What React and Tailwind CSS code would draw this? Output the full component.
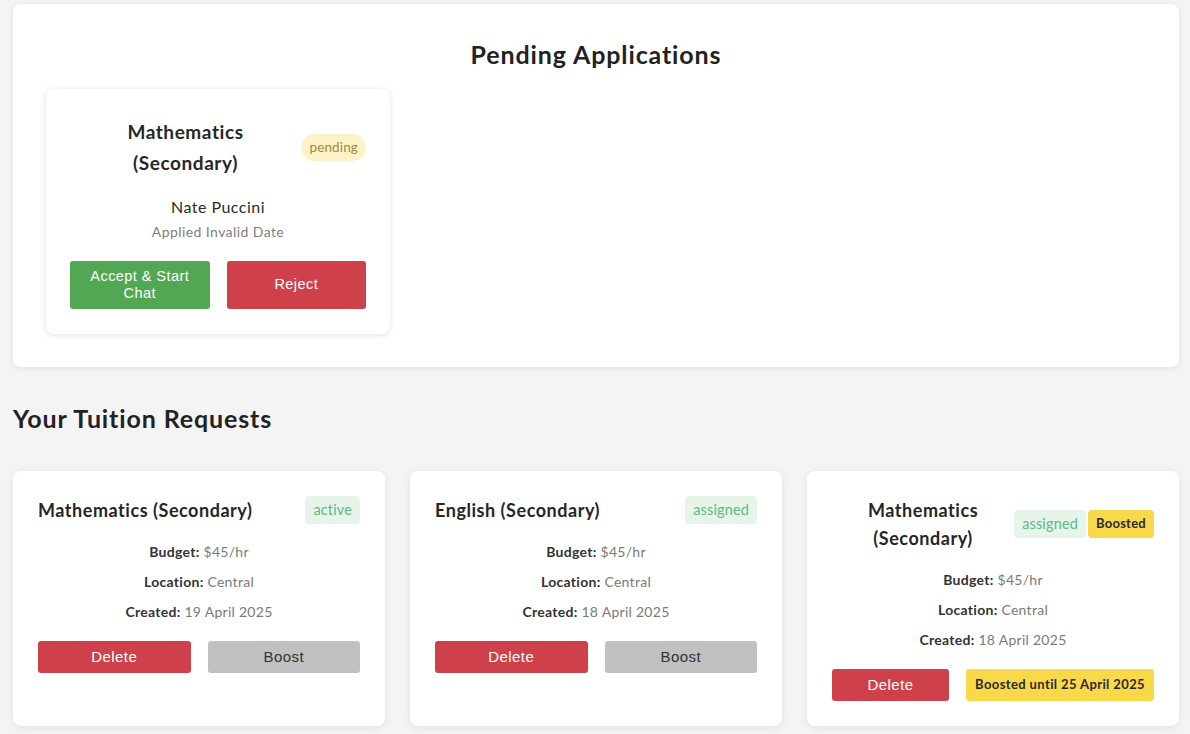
import React from 'react'

const requests = [
  {
    id: 1,
    subject: 'Mathematics (Secondary)',
    status: 'active',
    budget: '$45/hr',
    location: 'Central',
    created: '19 April 2025',
    boostedUntil: null,
  },
  {
    id: 2,
    subject: 'English (Secondary)',
    status: 'assigned',
    budget: '$45/hr',
    location: 'Central',
    created: '18 April 2025',
    boostedUntil: null,
  },
  {
    id: 3,
    subject: 'Mathematics (Secondary)',
    status: 'assigned',
    budget: '$45/hr',
    location: 'Central',
    created: '18 April 2025',
    boostedUntil: '25 April 2025',
  },
]

const btnFont = { fontFamily: '"Liberation Sans", Arial, sans-serif' }

function StatusBadge({ status }) {
  return (
    <span className="shrink-0 rounded-[4px] bg-[#e6f4ea] px-[8px] h-[28px] flex items-center text-[14.5px] tracking-[0.01em] text-[#5cba85]">
      {status}
    </span>
  )
}

function Detail({ label, value }) {
  return (
    <p className="text-[14px] leading-[20px] tracking-[0.02em] text-center">
      <span className="font-bold text-[#333]">{label}:</span>{' '}
      <span className="text-[#7a7a7a]">{value}</span>
    </p>
  )
}

function RequestCard({ req }) {
  return (
    <div className="bg-white rounded-[8px] shadow-[0_2px_8px_rgba(0,0,0,0.08)] p-[25px] flex flex-col">
      {/* header */}
      <div className="flex items-center justify-between">
        <h3 className="text-[18px] leading-[28px] font-bold tracking-[0.03em] text-[#262626] text-center">
          {req.subject}
        </h3>
        <div className="flex items-center gap-[2px]">
          <StatusBadge status={req.status} />
          {req.boostedUntil && (
            <span className="shrink-0 rounded-[4px] bg-[#f9d84a] px-[8px] h-[28px] flex items-center text-[13px] tracking-[0.02em] font-bold text-[#2a2a2a]">
              Boosted
            </span>
          )}
        </div>
      </div>

      <div className="mt-[18px] flex flex-col gap-[10px]">
        <Detail label="Budget" value={req.budget} />
        <Detail label="Location" value={req.location} />
        <Detail label="Created" value={req.created} />
      </div>

      <div className="mt-[19px] flex gap-[17px]">
        <button
          style={btnFont}
          className="flex-1 h-[32px] rounded-[3px] bg-[#cf414a] text-white text-[15px] tracking-[0.03em]"
        >
          Delete
        </button>
        {req.boostedUntil ? (
          <div className="shrink-0 h-[32px] rounded-[3px] bg-[#f9d84a] px-[9px] flex items-center text-[13px] tracking-[0.03em] font-bold text-[#2a2a2a]">
            Boosted until {req.boostedUntil}
          </div>
        ) : (
          <button
            style={btnFont}
            className="flex-1 h-[32px] rounded-[3px] bg-[#c1c1c1] text-[#333] text-[15px] tracking-[0.03em]"
          >
            Boost
          </button>
        )}
      </div>
    </div>
  )
}

export default function App() {
  return (
    <div
      className="min-h-screen bg-[#f4f4f4] pl-[13px] pr-[11px] pt-[4px] pb-[10px]"
      style={{ fontFamily: 'Lato, "Noto Sans", sans-serif' }}
    >
      {/* Pending applications */}
      <section className="bg-white rounded-[8px] shadow-[0_1px_6px_rgba(0,0,0,0.08)] px-[33px] pt-[34px] pb-[33px]">
        <h2 className="text-[25px] leading-[32px] font-bold tracking-[0.035em] text-center text-[#222]">
          Pending Applications
        </h2>
        <div className="mt-[19px] w-[344px] bg-white rounded-[8px] shadow-[0_1px_6px_rgba(0,0,0,0.12)] px-[24px] pt-[27px] pb-[25px]">
          <div className="flex items-center">
            <h3 className="w-[231px] text-[19px] leading-[31px] font-bold tracking-[0.03em] text-[#262626] text-center">
              Mathematics
              <br />
              (Secondary)
            </h3>
            <span className="ml-auto rounded-full bg-[#fdf2c8] px-[8px] h-[27px] flex items-center text-[13.5px] tracking-[0.01em] text-[#a38b3e]">
              pending
            </span>
          </div>
          <p className="mt-[17px] text-center text-[16px] leading-[24px] tracking-[0.03em] text-[#2a2a2a]">
            Nate Puccini
          </p>
          <p className="mt-[3px] text-center text-[14px] leading-[20px] tracking-[0.03em] text-[#808080]">
            Applied Invalid Date
          </p>
          <div className="mt-[19px] flex gap-[17px]">
            <button
              style={btnFont}
              className="flex-1 h-[48px] rounded-[3px] bg-[#52a852] text-white text-[14.5px] leading-[17px] tracking-[0.03em] px-[14px]"
            >
              Accept &amp; Start Chat
            </button>
            <button
              style={btnFont}
              className="flex-1 h-[48px] rounded-[3px] bg-[#cf414a] text-white text-[14.5px] tracking-[0.03em] px-[14px]"
            >
              Reject
            </button>
          </div>
        </div>
      </section>

      {/* Tuition requests */}
      <h2 className="mt-[35px] text-[25px] leading-[32px] font-bold tracking-[0.035em] text-[#222]">
        Your Tuition Requests
      </h2>
      <div className="mt-[37px] grid grid-cols-3 gap-[25px]">
        {requests.map((req) => (
          <RequestCard key={req.id} req={req} />
        ))}
      </div>
    </div>
  )
}
